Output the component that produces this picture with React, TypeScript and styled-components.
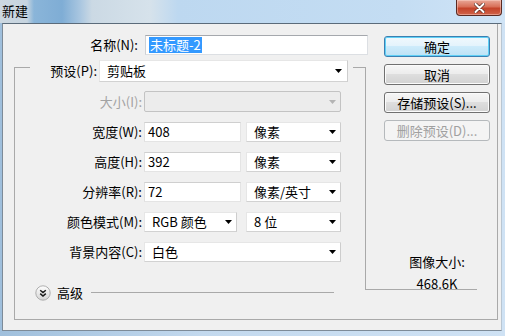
import React from "react";
import styled, { createGlobalStyle } from "styled-components";

const Global = createGlobalStyle`
  html, body { margin: 0; padding: 0; background: #c4d9ee; }
  body {
    width: 505px; height: 336px; overflow: hidden;
    font-family: "Noto Sans CJK SC", "Noto Sans", sans-serif;
    font-size: 13px; color: #000;
  }
  * { box-sizing: border-box; }
`;

const Window = styled.div`
  width: 505px;
  height: 336px;
  display: flex;
  flex-direction: column;
  background: linear-gradient(90deg, #9fbfdc 0%, #c3d9ee 40%, #cfe2f4 100%);
  overflow: hidden;
`;

const TitleBar = styled.div`
  height: 23px;
  flex: none;
  display: flex;
  align-items: flex-start;
  justify-content: space-between;
  background: linear-gradient(
    90deg,
    #cdd8e1 0px,
    #c6d4df 27px,
    #8ab5d9 34px,
    #7fadd5 62px,
    #a9c6e0 80px,
    #cbd9e4 92px,
    #d6e2eb 150px,
    #bdd8f0 178px,
    #c4ddf3 400px,
    #d0e4f6 505px
  );
`;

const Title = styled.div`
  padding: 3px 0 0 2px;
  font-size: 13px;
  line-height: 16px;
  color: #000;
`;

const CloseButton = styled.div`
  width: 46px;
  height: 16px;
  margin-right: 3px;
  border: 1px solid #5a2a22;
  border-top: none;
  border-radius: 0 0 4px 4px;
  background: linear-gradient(#e9a898 0%, #d86f58 45%, #c4432a 55%, #d0644a 100%);
  box-shadow: inset 0 0 0 1px rgba(255, 220, 210, 0.45);
  display: flex;
  align-items: center;
  justify-content: center;
`;

const ClientWrap = styled.div`
  flex: 1;
  display: flex;
  padding: 0 3px 5px 2px;
`;

const Client = styled.div`
  flex: 1;
  background: #f0f0f0;
  border-top: 1px solid #5b6b7a;
  border-left: 1px solid #7d8b98;
  border-right: 1px solid #b9c6d2;
  border-bottom: 1px solid #7d8b98;
  padding: 0 3px 0 11px;
`;

const Frame = styled.div`
  height: 296px;
  display: grid;
  grid-template-columns: 351px 19px 93px 13px 1fr;
  grid-template-rows: 43px 223px 1fr;
  border-right: 1px solid #a9a9a9;
  border-bottom: 1px solid #a9a9a9;
`;

const NameRow = styled.div`
  grid-row: 1;
  grid-column: 1 / span 2;
  display: flex;
  align-items: flex-start;
  padding-top: 11px;
`;

const Label = styled.div<{ $w: number; $gap?: number; $disabled?: boolean }>`
  width: ${(p) => p.$w}px;
  margin-right: ${(p) => p.$gap ?? 2}px;
  text-align: right;
  white-space: nowrap;
  line-height: 20px;
  color: ${(p) => (p.$disabled ? "#a3a3a3" : "#000")};
`;

const TextBox = styled.div<{ $w: number; $strong?: boolean }>`
  width: ${(p) => p.$w}px;
  height: 20px;
  background: #fff;
  border: 1px solid ${(p) => (p.$strong ? "#dcdfe3" : "#e4e4e4")};
  border-top-color: ${(p) => (p.$strong ? "#a5a8ad" : "#cfcfcf")};
  border-left-color: ${(p) => (p.$strong ? "#cdd0d4" : "#e0e0e0")};
  padding: 0 0 0 3px;
  display: flex;
  align-items: center;
  line-height: 16px;
  white-space: nowrap;
`;

const Selected = styled.span`
  background: #3399ff;
  color: #fff;
  padding: 0 1px;
`;

const SelectBox = styled.div<{ $w: number; $disabled?: boolean; $pad?: number }>`
  width: ${(p) => p.$w}px;
  height: 100%;
  display: flex;
  align-items: center;
  justify-content: space-between;
  padding: 0 ${(p) => p.$pad ?? 4}px 0 7px;
  background: ${(p) => (p.$disabled ? "#ececec" : "#fff")};
  border: 1px solid ${(p) => (p.$disabled ? "#c3c3c3" : "#e6e6e6")};
  border-right-color: ${(p) => (p.$disabled ? "#c3c3c3" : "#cdcdcd")};
  border-bottom-color: ${(p) => (p.$disabled ? "#c3c3c3" : "#d2d2d2")};
  border-radius: ${(p) => (p.$disabled ? "2px" : "0")};
  line-height: 16px;
  white-space: nowrap;
`;

const GroupBox = styled.div`
  grid-row: 2 / span 2;
  grid-column: 1;
  border-top: 1px solid #a9a9a9;
  border-left: 1px solid #a9a9a9;
  display: flex;
  flex-direction: column;
`;

const PresetRow = styled.div`
  margin: -8px 0 0 15px;
  width: 323px;
  height: 22px;
  padding-right: 5px;
  background: #f0f0f0;
  display: flex;
  align-items: center;
`;

const FieldRow = styled.div<{ $top: number; $h?: number }>`
  margin-top: ${(p) => p.$top}px;
  height: ${(p) => p.$h ?? 20}px;
  display: flex;
  align-items: center;
`;

const Pair = styled.div<{ $gap: number }>`
  display: flex;
  height: 100%;
  gap: ${(p) => p.$gap}px;
`;

const AdvancedRow = styled.div`
  margin: 22px 31px 0 20px;
  height: 17px;
  display: flex;
  align-items: center;
  gap: 6px;
`;

const AdvancedLine = styled.div`
  flex: 1;
  height: 1px;
  margin-left: 2px;
  background: #a9a9a9;
`;

const Bracket = styled.div`
  grid-row: 2;
  grid-column: 2 / span 2;
  border-left: 1px solid #a9a9a9;
  border-bottom: 1px solid #a9a9a9;
`;

const ButtonStack = styled.div`
  grid-row: 1 / span 2;
  grid-column: 3 / span 2;
  align-self: start;
  margin-top: 12px;
  display: flex;
  flex-direction: column;
  gap: 7px;
`;

const Btn = styled.div<{ $primary?: boolean; $disabled?: boolean }>`
  width: 106px;
  height: 21px;
  border-radius: 3px;
  display: flex;
  align-items: center;
  justify-content: center;
  line-height: 16px;
  white-space: nowrap;
  color: ${(p) => (p.$disabled ? "#a0a0a0" : "#000")};
  border: 1px solid
    ${(p) => (p.$primary ? "#3c7fb1" : p.$disabled ? "#b5b9bc" : "#707070")};
  background: ${(p) =>
    p.$primary
      ? "linear-gradient(#f0f8fd 0%, #e3f3fc 49%, #cdebfb 50%, #bde2f5 100%)"
      : p.$disabled
      ? "#f4f4f4"
      : "linear-gradient(#f6f6f6 0%, #ececec 49%, #dedede 50%, #d2d2d2 100%)"};
  box-shadow: ${(p) =>
    p.$primary
      ? "inset 0 0 0 1px #5fd0f6"
      : p.$disabled
      ? "none"
      : "inset 0 0 0 1px #fbfbfb"};
`;

const SizeInfo = styled.div`
  grid-row: 2;
  grid-column: 3 / span 2;
  align-self: end;
  margin-bottom: -4px;
  display: flex;
  flex-direction: column;
  align-items: center;
  gap: 2px;
  line-height: 20px;
`;

const Arrow = ({ color = "#000" }: { color?: string }) => (
  <svg width="7" height="4" viewBox="0 0 7 4">
    <path d="M0 0H7L3.5 4Z" fill={color} />
  </svg>
);

const ExpandIcon = () => (
  <svg width="16" height="16" viewBox="0 0 16 16">
    <defs>
      <linearGradient id="exg" x1="0" y1="0" x2="0" y2="1">
        <stop offset="0" stopColor="#ffffff" />
        <stop offset="1" stopColor="#d4d4d4" />
      </linearGradient>
    </defs>
    <circle cx="8" cy="8" r="7.2" fill="url(#exg)" stroke="#a6a6a6" strokeWidth="0.9" />
    <path d="M5.2 5.2L8 7.6L10.8 5.2M5.2 8.6L8 11L10.8 8.6" fill="none" stroke="#1a1a1a" strokeWidth="1.5" />
  </svg>
);

const CloseIcon = () => (
  <svg width="11" height="10" viewBox="0 0 11 10">
    <path d="M1.5 1L9.5 9M9.5 1L1.5 9" stroke="#5a2a22" strokeWidth="3.4" strokeLinecap="round" />
    <path d="M1.5 1L9.5 9M9.5 1L1.5 9" stroke="#ffffff" strokeWidth="2" strokeLinecap="round" />
  </svg>
);

export default function App() {
  return (
    <>
      <Global />
      <Window>
        <TitleBar>
          <Title>新建</Title>
          <CloseButton>
            <CloseIcon />
          </CloseButton>
        </TitleBar>
        <ClientWrap>
          <Client>
            <Frame>
              <NameRow>
                <Label $w={124} $gap={7}>名称(N):</Label>
                <TextBox $w={223} $strong>
                  <Selected>未标题-2</Selected>
                </TextBox>
              </NameRow>

              <GroupBox>
                <PresetRow>
                  <Label $w={67}>预设(P):</Label>
                  <SelectBox $w={249} $pad={5}>
                    <span>剪贴板</span>
                    <Arrow />
                  </SelectBox>
                </PresetRow>

                <FieldRow $top={9} $h={21}>
                  <Label $w={127} $disabled>大小(I):</Label>
                  <SelectBox $w={197} $disabled>
                    <span />
                    <Arrow color="#b4b4b4" />
                  </SelectBox>
                </FieldRow>

                <FieldRow $top={10}>
                  <Label $w={127}>宽度(W):</Label>
                  <Pair $gap={5}>
                    <TextBox $w={97}>408</TextBox>
                    <SelectBox $w={95}>
                      <span>像素</span>
                      <Arrow />
                    </SelectBox>
                  </Pair>
                </FieldRow>

                <FieldRow $top={10}>
                  <Label $w={127}>高度(H):</Label>
                  <Pair $gap={5}>
                    <TextBox $w={97}>392</TextBox>
                    <SelectBox $w={95}>
                      <span>像素</span>
                      <Arrow />
                    </SelectBox>
                  </Pair>
                </FieldRow>

                <FieldRow $top={10}>
                  <Label $w={127}>分辨率(R):</Label>
                  <Pair $gap={5}>
                    <TextBox $w={97}>72</TextBox>
                    <SelectBox $w={95}>
                      <span>像素/英寸</span>
                      <Arrow />
                    </SelectBox>
                  </Pair>
                </FieldRow>

                <FieldRow $top={10}>
                  <Label $w={127}>颜色模式(M):</Label>
                  <Pair $gap={9}>
                    <SelectBox $w={93}>
                      <span>RGB 颜色</span>
                      <Arrow />
                    </SelectBox>
                    <SelectBox $w={95}>
                      <span>8 位</span>
                      <Arrow />
                    </SelectBox>
                  </Pair>
                </FieldRow>

                <FieldRow $top={10}>
                  <Label $w={127}>背景内容(C):</Label>
                  <SelectBox $w={197}>
                    <span>白色</span>
                    <Arrow />
                  </SelectBox>
                </FieldRow>

                <AdvancedRow>
                  <ExpandIcon />
                  <span>高级</span>
                  <AdvancedLine />
                </AdvancedRow>
              </GroupBox>

              <Bracket />

              <ButtonStack>
                <Btn $primary>确定</Btn>
                <Btn>取消</Btn>
                <Btn>存储预设(S)...</Btn>
                <Btn $disabled>删除预设(D)...</Btn>
              </ButtonStack>

              <SizeInfo>
                <div>图像大小:</div>
                <div>468.6K</div>
              </SizeInfo>
            </Frame>
          </Client>
        </ClientWrap>
      </Window>
    </>
  );
}
